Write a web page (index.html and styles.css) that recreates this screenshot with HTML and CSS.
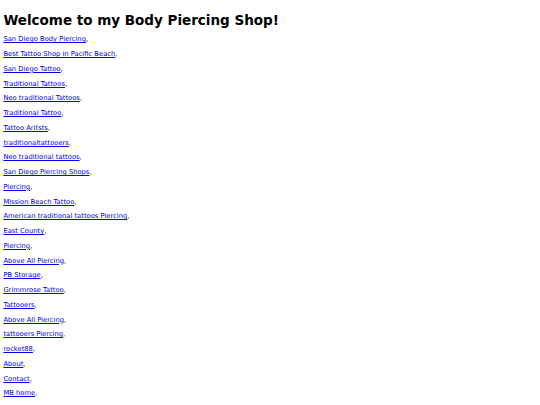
FILE: index.html
```html
<!DOCTYPE html>
<html lang="en">
<head>
    <meta charset="UTF-8">
    <title>Body Piercing Shop</title>
    <link rel="stylesheet" href="styles.css">
</head>
<body>
    <h1 class="title">Welcome to my Body Piercing Shop!</h1>
    <p class="item"><a href="#">San Diego Body Piercing</a>,</p>
    <p class="item"><a href="#">Best Tattoo Shop in Pacific Beach</a>,</p>
    <p class="item"><a href="#">San Diego Tattoo</a>,</p>
    <p class="item"><a href="#">Traditional Tattoos</a>,</p>
    <p class="item"><a href="#">Neo traditional Tattoos</a>,</p>
    <p class="item"><a href="#">Traditional Tattoo</a>,</p>
    <p class="item"><a href="#">Tattoo Aritsts</a>,</p>
    <p class="item"><a href="#">traditionaltattooers</a>,</p>
    <p class="item"><a href="#">Neo traditional tattoos</a>,</p>
    <p class="item"><a href="#">San Diego Piercing Shops</a>,</p>
    <p class="item"><a href="#">Piercing</a>,</p>
    <p class="item"><a href="#">Mission Beach Tattoo</a>,</p>
    <p class="item"><a href="#">American traditional tattoos Piercing</a>,</p>
    <p class="item"><a href="#">East County</a>,</p>
    <p class="item"><a href="#">Piercing</a>,</p>
    <p class="item"><a href="#">Above All Piercing</a>,</p>
    <p class="item"><a href="#">PB Storage</a>,</p>
    <p class="item"><a href="#">Grimmrose Tattoo</a>,</p>
    <p class="item"><a href="#">Tattooers</a>,</p>
    <p class="item"><a href="#">Above All Piercing</a>,</p>
    <p class="item"><a href="#">tattooers Piercing</a>,</p>
    <p class="item"><a href="#">rocket88</a>,</p>
    <p class="item"><a href="#">About</a>,</p>
    <p class="item"><a href="#">Contact</a>,</p>
    <p class="item"><a href="#">MB home</a>,</p>
</body>
</html>
```

FILE: styles.css
```css
body {
    font-family: "DejaVu Sans", sans-serif;
    margin: 3.4px;
    background: #fff;
    color: #000;
}
.title {
    font-size: 13.5px;
    margin: 9px 0 7px;
}
.item {
    font-size: 6.75px;
    margin: 6.75px 0;
    line-height: 8px;
}
.item a {
    color: #0000ee;
}
```
